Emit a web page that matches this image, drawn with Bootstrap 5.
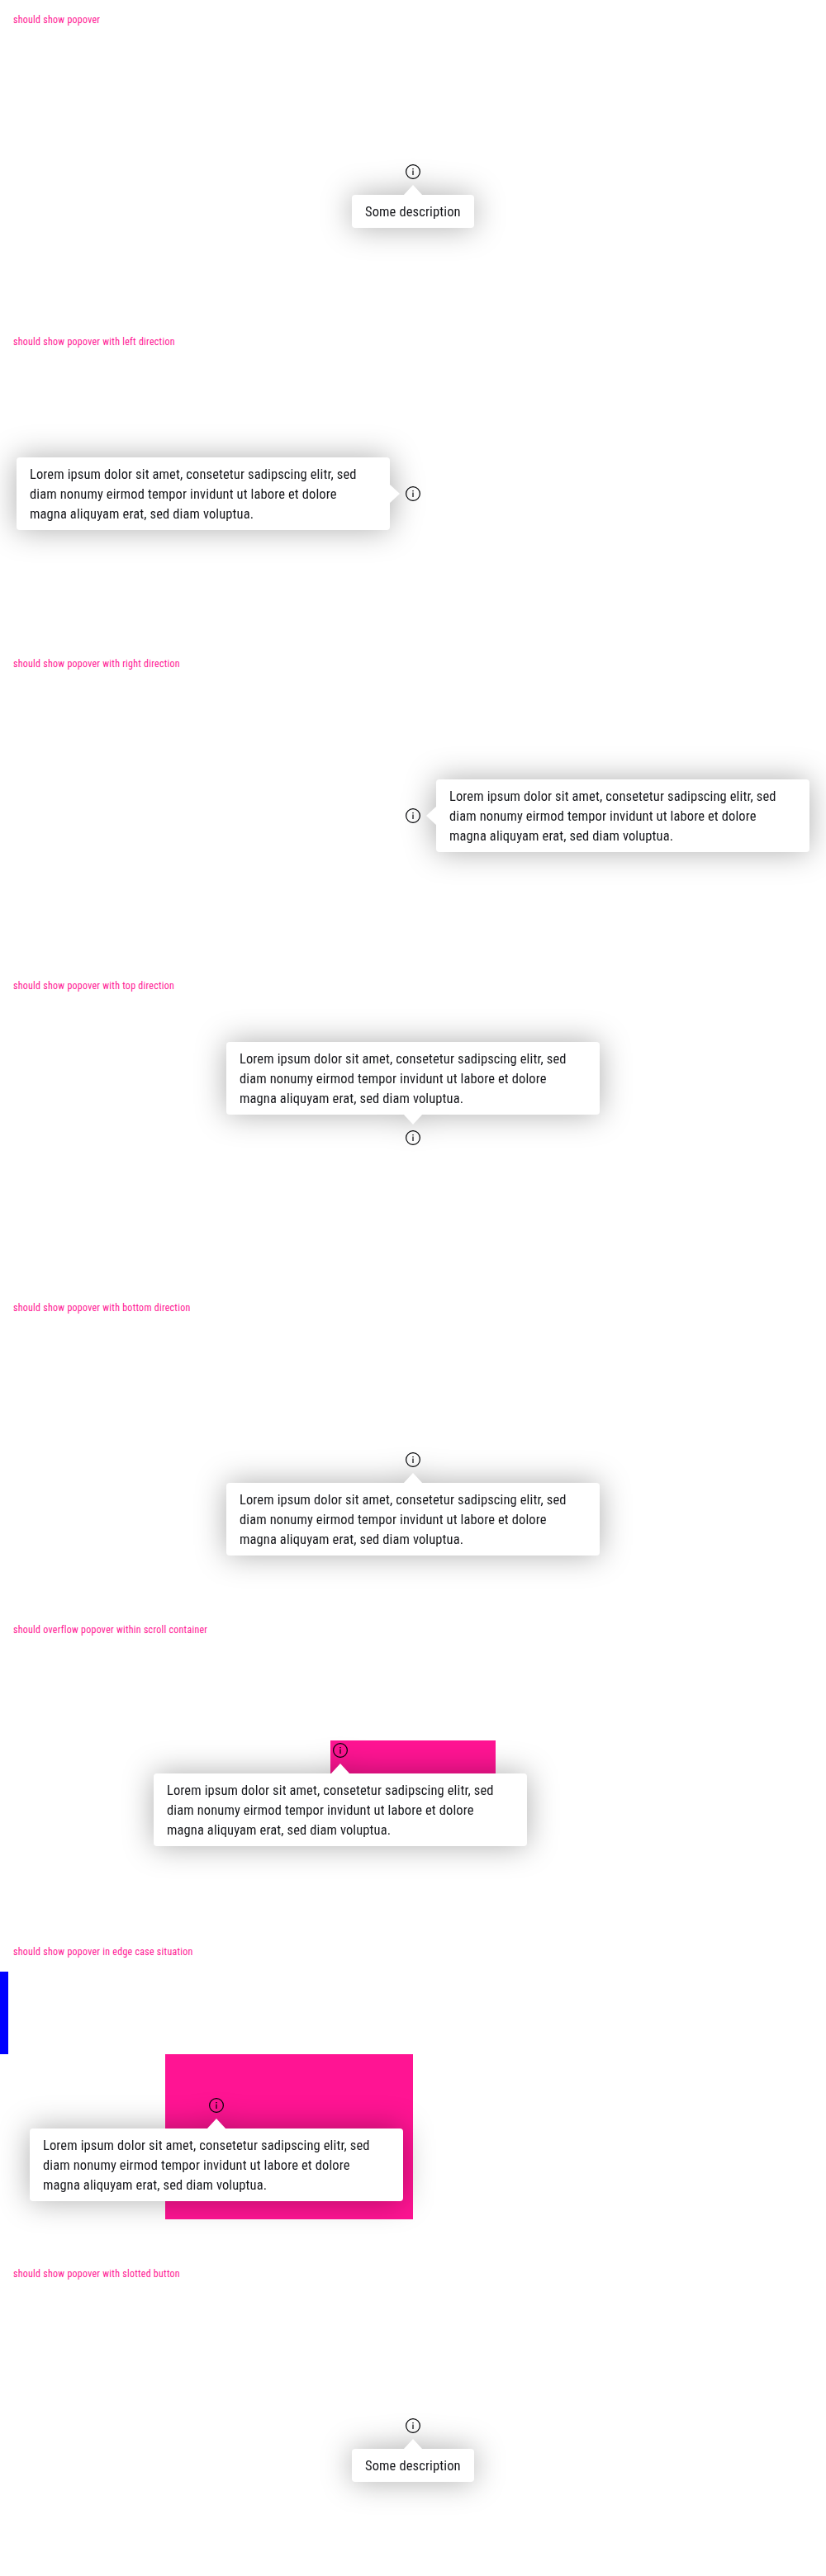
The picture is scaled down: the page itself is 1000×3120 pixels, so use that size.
<!DOCTYPE html>
<html lang="en">
<head>
<meta charset="utf-8">
<meta name="viewport" content="width=device-width, initial-scale=1">
<title>Popover</title>
<link rel="stylesheet" href="https://cdn.jsdelivr.net/npm/bootstrap@5.3.0/dist/css/bootstrap.min.css">
<style>
  body { font-family: Roboto, "Liberation Sans", sans-serif; font-stretch: 75%; font-weight: 400; color: #010205; overflow-x: hidden; }
  .case { height: 390px; }
  .case-title { height: 48px; font-size: 12px; line-height: 17px; letter-spacing: .25px; color: #ff1493; }
  .stage { height: 342px; padding-top: 148px; }
  .trigger { width: 24px; height: 24px; color: #010205; }
  .trigger svg { width: 24px; height: 24px; }
  .tip { width: 452px; filter: drop-shadow(0 0 18px rgba(0, 0, 0, .32)); }
  .tip-short { width: 148px; }
  .tip-text { padding: 9px 16px 7px; font-size: 16.5px; line-height: 24px; letter-spacing: .12px; border-radius: 4px; color: #15161a; }
  .tip::before { content: ""; position: absolute; background: #fff; }
  .tip-bottom { top: 40px; left: 50%; transform: translateX(-50%); }
  .tip-top { bottom: 40px; left: 50%; transform: translateX(-50%); }
  .tip-left { right: 40px; top: 50%; transform: translateY(-50%); }
  .tip-right { left: 40px; top: 50%; transform: translateY(-50%); }
  .tip-bottom::before, .tip-top::before { width: 24px; height: 13px; left: calc(50% - 12px); }
  .tip-bottom::before { top: -12px; clip-path: polygon(50% 0, 100% 100%, 0 100%); }
  .tip-top::before { bottom: -12px; clip-path: polygon(0 0, 100% 0, 50% 100%); }
  .tip-left::before, .tip-right::before { width: 13px; height: 24px; top: calc(50% - 12px); }
  .tip-left::before { right: -12px; clip-path: polygon(0 0, 100% 50%, 0 100%); }
  .tip-right::before { left: -12px; clip-path: polygon(100% 0, 100% 100%, 0 50%); }
  .pink { background: #ff1493; }
  .scroll-box { width: 200px; height: 100px; margin: 110px 0 0 400px; }
  .edge-box { width: 300px; height: 200px; margin-left: 200px; padding: 50px; }
  .edge-bar { width: 10px; height: 100px; background: #00f; }
</style>
<script src="https://cdn.jsdelivr.net/npm/bootstrap@5.3.0/dist/js/bootstrap.bundle.min.js"></script>
</head>
<body class="bg-white">
<svg class="d-none" xmlns="http://www.w3.org/2000/svg">
  <symbol id="info" viewBox="0 0 24 24">
    <circle cx="12" cy="12" r="8.4" fill="none" stroke="currentColor" stroke-width="1.2"/>
    <path d="M11.4 10.5h1.2V16h-1.2zM11.3 8h1.4v1.3h-1.4z" fill="currentColor"/>
  </symbol>
</svg>

<section class="case">
  <div class="case-title px-3 pt-3">should show popover</div>
  <div class="stage d-flex justify-content-center">
    <div class="trigger position-relative"><svg class="d-block"><use href="#info"/></svg>
      <div class="tip tip-short tip-bottom position-absolute"><div class="tip-text bg-white text-nowrap">Some description</div></div>
    </div>
  </div>
</section>

<section class="case">
  <div class="case-title px-3 pt-3">should show popover with left direction</div>
  <div class="stage d-flex justify-content-center">
    <div class="trigger position-relative"><svg class="d-block"><use href="#info"/></svg>
      <div class="tip tip-left position-absolute"><div class="tip-text bg-white text-nowrap">Lorem ipsum dolor sit amet, consetetur sadipscing elitr, sed<br>diam nonumy eirmod tempor invidunt ut labore et dolore<br>magna aliquyam erat, sed diam voluptua.</div></div>
    </div>
  </div>
</section>

<section class="case">
  <div class="case-title px-3 pt-3">should show popover with right direction</div>
  <div class="stage d-flex justify-content-center">
    <div class="trigger position-relative"><svg class="d-block"><use href="#info"/></svg>
      <div class="tip tip-right position-absolute"><div class="tip-text bg-white text-nowrap">Lorem ipsum dolor sit amet, consetetur sadipscing elitr, sed<br>diam nonumy eirmod tempor invidunt ut labore et dolore<br>magna aliquyam erat, sed diam voluptua.</div></div>
    </div>
  </div>
</section>

<section class="case">
  <div class="case-title px-3 pt-3">should show popover with top direction</div>
  <div class="stage d-flex justify-content-center">
    <div class="trigger position-relative"><svg class="d-block"><use href="#info"/></svg>
      <div class="tip tip-top position-absolute"><div class="tip-text bg-white text-nowrap">Lorem ipsum dolor sit amet, consetetur sadipscing elitr, sed<br>diam nonumy eirmod tempor invidunt ut labore et dolore<br>magna aliquyam erat, sed diam voluptua.</div></div>
    </div>
  </div>
</section>

<section class="case">
  <div class="case-title px-3 pt-3">should show popover with bottom direction</div>
  <div class="stage d-flex justify-content-center">
    <div class="trigger position-relative"><svg class="d-block"><use href="#info"/></svg>
      <div class="tip tip-bottom position-absolute"><div class="tip-text bg-white text-nowrap">Lorem ipsum dolor sit amet, consetetur sadipscing elitr, sed<br>diam nonumy eirmod tempor invidunt ut labore et dolore<br>magna aliquyam erat, sed diam voluptua.</div></div>
    </div>
  </div>
</section>

<section class="case">
  <div class="case-title px-3 pt-3">should overflow popover within scroll container</div>
  <div class="stage pt-0 d-flex flex-column">
    <div class="pink scroll-box">
      <div class="trigger position-relative"><svg class="d-block"><use href="#info"/></svg>
        <div class="tip tip-bottom position-absolute"><div class="tip-text bg-white text-nowrap">Lorem ipsum dolor sit amet, consetetur sadipscing elitr, sed<br>diam nonumy eirmod tempor invidunt ut labore et dolore<br>magna aliquyam erat, sed diam voluptua.</div></div>
      </div>
    </div>
  </div>
</section>

<section class="case">
  <div class="case-title px-3 pt-3">should show popover in edge case situation</div>
  <div class="stage pt-0">
    <div class="edge-bar"></div>
    <div class="pink edge-box">
      <div class="trigger position-relative"><svg class="d-block"><use href="#info"/></svg>
        <div class="tip tip-bottom position-absolute"><div class="tip-text bg-white text-nowrap">Lorem ipsum dolor sit amet, consetetur sadipscing elitr, sed<br>diam nonumy eirmod tempor invidunt ut labore et dolore<br>magna aliquyam erat, sed diam voluptua.</div></div>
      </div>
    </div>
  </div>
</section>

<section class="case">
  <div class="case-title px-3 pt-3">should show popover with slotted button</div>
  <div class="stage d-flex justify-content-center">
    <div class="trigger position-relative"><svg class="d-block"><use href="#info"/></svg>
      <div class="tip tip-short tip-bottom position-absolute"><div class="tip-text bg-white text-nowrap">Some description</div></div>
    </div>
  </div>
</section>
</body>
</html>
